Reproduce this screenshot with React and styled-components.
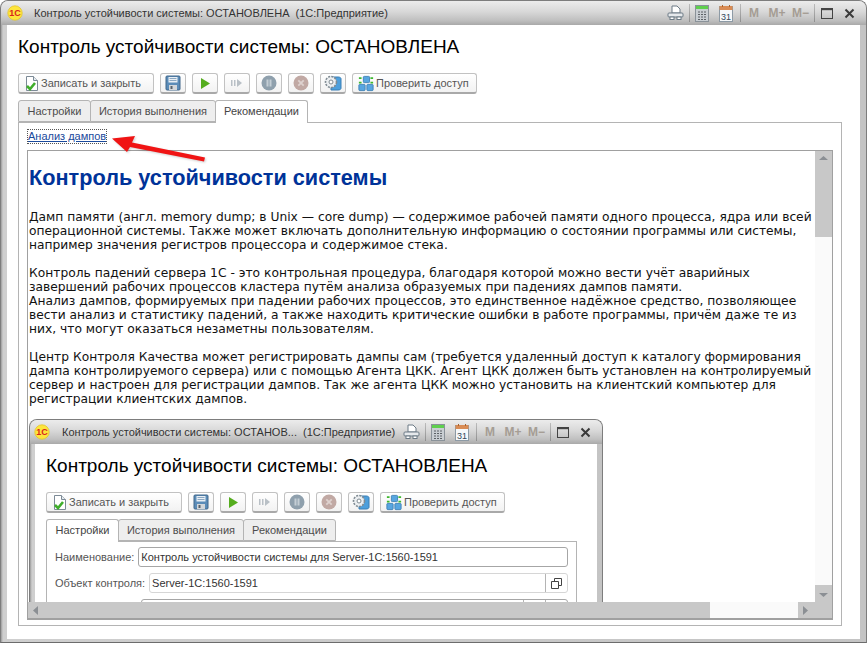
import styled, { createGlobalStyle } from 'styled-components';

const GlobalStyle = createGlobalStyle`
  html, body {
    margin: 0;
    padding: 0;
    background: #fff;
  }
  body {
    width: 867px;
    height: 645px;
    overflow: hidden;
    font-family: "Liberation Sans", Arial, sans-serif;
    font-size: 11px;
    color: #4a4a40;
  }
`;

const Page = styled.div`
  position: relative;
  width: 867px;
  height: 645px;
  overflow: hidden;
`;

const WindowFrame = styled.div`
  box-sizing: border-box;
  display: flex;
  flex-direction: column;
  flex: none;
  width: ${({ $width }) => $width}px;
  height: ${({ $height }) => $height}px;
  padding: 0 ${({ $dense }) => ($dense ? 5 : 6)}px 3px;
  background: linear-gradient(90deg, #9c9c9c 0, #cfcfcf 2px, #c4c4c4 100%);
  border: 1px solid #7d7d7d;
  border-bottom-color: #6c6c6c;
  border-radius: 8px 8px 0 0;
`;

const TitleBar = styled.div`
  display: flex;
  align-items: center;
  flex: none;
  height: 24px;
  margin: 0 ${({ $dense }) => ($dense ? -5 : -6)}px;
  padding: 0 11px 0 ${({ $dense }) => ($dense ? 4 : 6)}px;
  background: linear-gradient(#ececec 0, #d8d8d8 45%, #c0c0c0 80%, #a9a9a9 100%);
  border-radius: 7px 7px 0 0;
`;

const TitleText = styled.span`
  flex: 1;
  margin-left: ${({ $dense }) => ($dense ? 12 : 11)}px;
  color: #333;
  white-space: pre;
`;

const TitleIcons = styled.div`
  display: flex;
  align-items: center;
  height: 100%;
`;

const TitleSep = styled.i`
  width: 1px;
  height: 18px;
  margin: 0 ${({ $right }) => $right}px 0 ${({ $left }) => $left}px;
  background: linear-gradient(#bbb, #8f8f8f);
`;

const IconGap = styled.span`
  flex: none;
  width: ${({ $w }) => $w}px;
`;

const MemKey = styled.b`
  width: ${({ $w }) => $w}px;
  color: #a59d94;
  font-size: 12px;
  text-align: center;
`;

const FormBody = styled.div`
  display: flex;
  flex-direction: column;
  flex: 1;
  min-height: 0;
  padding: 0 ${({ $dense }) => ($dense ? 20 : 18)}px 13px 11px;
  background: #fff;
`;

const FormTitle = styled.h1`
  margin: 0;
  height: 48px;
  color: #000;
  font-size: 19px;
  font-weight: 400;
  line-height: 44px;
  white-space: nowrap;
`;

const Toolbar = styled.div`
  display: flex;
  gap: 6px;
  flex: none;
  height: 21px;
`;

const ToolButton = styled.div`
  box-sizing: border-box;
  display: flex;
  align-items: center;
  justify-content: ${({ $text }) => ($text ? 'flex-start' : 'center')};
  gap: 2px;
  width: ${({ $w }) => $w || 26}px;
  height: 21px;
  padding: ${({ $text }) => ($text ? '0 0 0 5px' : '0')};
  color: #555;
  background: linear-gradient(#fff, #f2f2f2);
  border: 1px solid #c2c2c2;
  border-bottom: 2px solid #a9a9a9;
  border-radius: 3px;
  white-space: nowrap;
`;

const TabRow = styled.div`
  display: flex;
  flex: none;
  height: 23px;
  margin-top: 6px;
`;

const Tab = styled.div`
  box-sizing: border-box;
  width: ${({ $w }) => $w}px;
  height: ${({ $active }) => ($active ? 23 : 22)}px;
  margin-left: ${({ $first }) => ($first ? 0 : -1)}px;
  padding-top: 4px;
  color: ${({ $active }) => ($active ? '#444' : '#4c4c4c')};
  text-align: center;
  background: ${({ $active }) => ($active ? '#fff' : '#eee')};
  border: 1px solid #b4b4b4;
  border-bottom: ${({ $active }) => ($active ? 'none' : '1px solid #b4b4b4')};
  border-radius: 3px 3px 0 0;
  position: relative;
  z-index: ${({ $active }) => ($active ? 1 : 0)};
`;

const TabPanel = styled.div`
  box-sizing: border-box;
  display: flex;
  flex-direction: column;
  flex: 1;
  min-height: 0;
  margin: -1px 0 0 0;
  padding: ${({ $dense }) => ($dense ? '5px 8px 0 8px' : '6px 8px 5px 8px')};
  gap: 6px;
  border: 1px solid #b4b4b4;
`;

const LinkLine = styled.div`
  flex: none;
  height: 15px;
  padding-top: 1px;
  box-sizing: border-box;
`;

const DumpLink = styled.a`
  display: inline-block;
  margin-left: 1px;
  color: #1a4a9c;
  font-size: 11px;
  line-height: 13px;
  text-decoration: underline;
  outline: 1px dotted #555;
`;

const Browser = styled.div`
  box-sizing: border-box;
  display: grid;
  grid-template-columns: 1fr 17px;
  grid-template-rows: 1fr 16px;
  flex: 1;
  min-height: 0;
  background: #fff;
  border: 1px solid #a0a0a0;
  border-bottom-width: 2px;
`;

const Viewport = styled.div`
  overflow: hidden;
  min-width: 0;
  min-height: 0;
  padding: 0 0 0 1px;
`;

const Article = styled.div`
  width: 786px;
  color: #111;
  font-family: "DejaVu Sans", Verdana, sans-serif;
  font-size: 12.27px;
  line-height: 14px;
`;

const ArticleTitle = styled.h2`
  margin: 13px 0 18px;
  color: #003399;
  font-family: "Liberation Sans", Arial, sans-serif;
  font-size: 21.7px;
  font-weight: 700;
  line-height: 28px;
`;

const Paragraph = styled.p`
  margin: 0 0 14px;
  white-space: nowrap;
`;

const ScreenBlock = styled.div`
  margin-top: -1px;
  font-family: "Liberation Sans", Arial, sans-serif;
  font-size: 11px;
  line-height: normal;
  color: #4a4a40;
`;

const ScrollV = styled.div`
  display: flex;
  flex-direction: column;
  background: #fafafa;
`;

const ScrollH = styled.div`
  display: flex;
  background: #fafafa;
`;

const Thumb = styled.div`
  flex: none;
  ${({ $vertical, $size }) => ($vertical ? `height: ${$size}px;` : `width: ${$size}px;`)}
  display: flex;
  align-items: ${({ $vertical }) => ($vertical ? 'flex-start' : 'center')};
  justify-content: ${({ $vertical }) => ($vertical ? 'center' : 'flex-start')};
  padding: ${({ $vertical }) => ($vertical ? '4px 0 0' : '0 0 0 4px')};
  box-sizing: border-box;
  background: #c8c8c8;
`;

const Track = styled.div`
  flex: 1;
`;

const ArrowCell = styled.div`
  flex: none;
  display: flex;
  align-items: center;
  justify-content: center;
  width: 17px;
  height: ${({ $h }) => $h || 17}px;
  background: #c8c8c8;
`;

const Corner = styled.div`
  background: #c8c8c8;
`;

const FieldRow = styled.div`
  display: flex;
  align-items: center;
  flex: none;
  height: 20px;
  gap: 4px;
`;

const FieldLabel = styled.span`
  flex: none;
  color: #555;
  white-space: nowrap;
`;

const FieldInput = styled.div`
  box-sizing: border-box;
  display: flex;
  align-items: center;
  flex: 1;
  min-width: 0;
  height: 20px;
  margin-left: ${({ $indent }) => $indent || 0}px;
  padding-left: 2px;
  color: #333;
  background: #fff;
  border: 1px solid ${({ $soft }) => ($soft ? '#d6d6d6' : '#a6a6a6')};
  border-radius: 3px;
  white-space: nowrap;
`;

const InputValue = styled.span`
  flex: 1;
`;

const InputAddon = styled.div`
  flex: none;
  display: flex;
  align-items: center;
  justify-content: center;
  width: 21px;
  height: 18px;
  border-left: 1px solid #b4b4b4;
`;

const RedArrow = styled.svg`
  position: absolute;
  left: 105px;
  top: 130px;
  filter: drop-shadow(1px 1px 1px rgba(0, 0, 0, 0.2));
`;

const Logo = () => (
  <svg width="16" height="16" viewBox="0 0 16 16">
    <circle cx="8" cy="8" r="7.2" fill="#fde53c" stroke="#e5c52a" strokeWidth="0.8" />
    <text x="8" y="11" fontSize="9" fontWeight="700" fill="#d8261c" textAnchor="middle" fontFamily="Liberation Sans">1С</text>
  </svg>
);

const PrintIcon = () => (
  <svg width="17" height="16" viewBox="0 0 17 16">
    <path d="M5 1h5l3 3v4H5z" fill="#fff" stroke="#6d7b86" />
    <rect x="1" y="8" width="15" height="4" rx="1" fill="#e6e9ec" stroke="#6d7b86" />
    <rect x="3" y="12" width="4" height="2.5" fill="#fff" stroke="#6d7b86" />
    <rect x="10" y="12" width="4" height="2.5" fill="#fff" stroke="#6d7b86" />
  </svg>
);

const CalcIcon = () => (
  <svg width="14" height="17" viewBox="0 0 14 17">
    <rect x="0.5" y="0.5" width="13" height="16" fill="#c9ced3" stroke="#8a9299" />
    <rect x="1" y="1" width="12" height="3" fill="#5fcf4e" />
    <path d="M3 7h2M6 7h2M9 7h2M3 9.500h2M6 9.500h2M9 9.500h2M3 12h2M6 12h2M9 12h2M3 14.500h2M6 14.500h2M9 14.500h2" stroke="#5c6166" />
  </svg>
);

const CalendarIcon = () => (
  <svg width="14" height="17" viewBox="0 0 14 17">
    <rect x="0.500" y="1.500" width="13" height="15" fill="#f6f8fa" stroke="#8d9aa5" />
    <rect x="0.500" y="1" width="13" height="4" fill="#d98c55" />
    <path d="M3.500 0v2M10.500 0v2" stroke="#a5622f" />
    <text x="7" y="14.500" fontSize="9" fill="#33475a" textAnchor="middle" fontFamily="Liberation Sans">31</text>
  </svg>
);

const MaxIcon = () => (
  <svg width="12" height="11" viewBox="0 0 12 11">
    <rect x="0.500" y="0.500" width="11" height="10" fill="none" stroke="#444" />
    <path d="M0 1.500h12" stroke="#444" strokeWidth="1.400" />
  </svg>
);

const CloseIcon = () => (
  <svg width="11" height="11" viewBox="0 0 11 11">
    <path d="M1.500 1.500l8 8M9.500 1.500l-8 8" stroke="#3a3a3a" strokeWidth="2" />
  </svg>
);

const SaveCloseIcon = () => (
  <svg width="15" height="17" viewBox="0 0 15 17">
    <path d="M2.500 1.500h7l4 4v10h-11z" fill="#fff" stroke="#7c8a96" />
    <path d="M9.500 1.500v4h4" fill="#e6ebef" stroke="#7c8a96" />
    <path d="M3 11l3 3 5-6" fill="none" stroke="#3fae2a" strokeWidth="2.600" />
  </svg>
);

const SaveIcon = () => (
  <svg width="16" height="16" viewBox="0 0 16 16">
    <rect x="1" y="1" width="14" height="14" rx="1" fill="#5b8cb8" stroke="#41678a" />
    <rect x="3.500" y="2" width="9" height="5.500" fill="#e9eff5" />
    <path d="M4.500 3.500h7M4.500 5.500h7" stroke="#8ba8c2" />
    <rect x="4" y="10" width="8" height="5" fill="#d2d6da" />
    <rect x="5.500" y="11" width="2" height="3" fill="#56616b" />
  </svg>
);

const PlayIcon = () => (
  <svg width="12" height="13" viewBox="0 0 12 13">
    <path d="M2 1l9 5.500-9 5.500z" fill="#55ad1e" />
  </svg>
);

const StepIcon = () => (
  <svg width="14" height="10" viewBox="0 0 14 10">
    <path d="M1 2h1.500v6H1zM4 2h1.500v6H4z" fill="#b9c0c6" />
    <path d="M7 1l5 4-5 4z" fill="#b9c0c6" />
  </svg>
);

const PauseIcon = () => (
  <svg width="16" height="16" viewBox="0 0 16 16">
    <circle cx="8" cy="8" r="7.500" fill="#8fa0ad" />
    <path d="M5.500 4.500h2v7h-2zM8.500 4.500h2v7h-2z" fill="#c4ced5" />
  </svg>
);

const StopIcon = () => (
  <svg width="16" height="16" viewBox="0 0 16 16">
    <circle cx="8" cy="8" r="7.500" fill="#c1a9a4" />
    <path d="M5.300 5.300l5.400 5.400M10.700 5.300l-5.400 5.400" stroke="#ded2cf" strokeWidth="1.800" />
  </svg>
);

const GearDbIcon = () => (
  <svg width="18" height="17" viewBox="0 0 18 17">
    <path d="M7 2h7c2 0 3 .8 3 1.800v9.400c0 1-1 1.800-3 1.800H7z" fill="#4d9fdc" stroke="#3a7fb5" />
    <circle cx="7" cy="7" r="5.500" fill="#eceff1" stroke="#7f8a92" strokeWidth="1.600" strokeDasharray="2 1.200" />
    <circle cx="7" cy="7" r="2" fill="#fff" stroke="#7f8a92" />
  </svg>
);

const NetworkIcon = () => (
  <svg width="16" height="17" viewBox="0 0 18 18">
    <rect x="6" y="1" width="7" height="7" rx="1" fill="#57a6e0" stroke="#3c7fb3" />
    <rect x="1" y="10" width="7" height="7" rx="1" fill="#57a6e0" stroke="#3c7fb3" />
    <rect x="10" y="10" width="7" height="7" rx="1" fill="#57a6e0" stroke="#3c7fb3" />
    <path d="M1 3h3M14 3h3M1 8h3M14 8h3" stroke="#3eb82e" strokeWidth="2" />
  </svg>
);

const CopyIcon = () => (
  <svg width="11" height="11" viewBox="0 0 11 11">
    <path d="M3.500 3V.500h7v7H8M.500 3.500h7v7h-7z" fill="none" stroke="#444" />
  </svg>
);

const Tri = ({ dir }) => {
  const paths = {
    up: 'M0 5L4.500 1 9 5z',
    down: 'M0 4l4.500 4L9 4z',
    left: 'M6 0L1 4.500 6 9z',
    right: 'M1 0l5 4.500L1 9z',
  };
  return (
    <svg width="9" height="9" viewBox="0 0 9 9" style={{ display: 'block' }}>
      <path d={paths[dir]} fill="#8b8f94" />
    </svg>
  );
};

const tabs = [
  { label: 'Настройки', width: 73 },
  { label: 'История выполнения', width: 126 },
  { label: 'Рекомендации', width: 93 },
];

function Window({ width, height, caption, activeTab, dense, children }) {
  return (
    <WindowFrame $width={width} $height={height} $dense={dense}>
      <TitleBar $dense={dense}>
        <Logo />
        <TitleText $dense={dense}>{caption}</TitleText>
        <TitleIcons>
          <PrintIcon />
          <TitleSep $left={5} $right={5} />
          <CalcIcon />
          <IconGap $w={10} />
          <CalendarIcon />
          <TitleSep $left={7} $right={5} />
          <MemKey $w={16}>M</MemKey>
          <MemKey $w={30}>M+</MemKey>
          <MemKey $w={16}>M−</MemKey>
          <TitleSep $left={6} $right={6} />
          <MaxIcon />
          <IconGap $w={11} />
          <CloseIcon />
        </TitleIcons>
      </TitleBar>
      <FormBody $dense={dense}>
        <FormTitle>Контроль устойчивости системы: ОСТАНОВЛЕНА</FormTitle>
        <Toolbar>
          <ToolButton $text $w={136}>
            <SaveCloseIcon />
            Записать и закрыть
          </ToolButton>
          <ToolButton><SaveIcon /></ToolButton>
          <ToolButton><PlayIcon /></ToolButton>
          <ToolButton><StepIcon /></ToolButton>
          <ToolButton><PauseIcon /></ToolButton>
          <ToolButton><StopIcon /></ToolButton>
          <ToolButton><GearDbIcon /></ToolButton>
          <ToolButton $text $w={125}>
            <NetworkIcon />
            Проверить доступ
          </ToolButton>
        </Toolbar>
        <TabRow>
          {tabs.map((tab, i) => (
            <Tab key={tab.label} $w={tab.width} $first={i === 0} $active={i === activeTab}>
              {tab.label}
            </Tab>
          ))}
        </TabRow>
        <TabPanel $dense={dense}>{children}</TabPanel>
      </FormBody>
    </WindowFrame>
  );
}

function App() {
  return (
    <Page>
      <GlobalStyle />
      <Window
        width={867}
        height={643}
        caption="Контроль устойчивости системы: ОСТАНОВЛЕНА  (1С:Предприятие)"
        activeTab={2}
      >
        <LinkLine>
          <DumpLink>Анализ дампов</DumpLink>
        </LinkLine>
        <Browser>
          <Viewport>
            <Article>
              <ArticleTitle>Контроль устойчивости системы</ArticleTitle>
              <Paragraph>
                Дамп памяти (англ. memory dump; в Unix — core dump) — содержимое рабочей памяти одного процесса, ядра или всей
                <br />
                операционной системы. Также может включать дополнительную информацию о состоянии программы или системы,
                <br />
                например значения регистров процессора и содержимое стека.
              </Paragraph>
              <Paragraph>
                Контроль падений сервера 1С - это контрольная процедура, благодаря которой можно вести учёт аварийных
                <br />
                завершений рабочих процессов кластера путём анализа образуемых при падениях дампов памяти.
                <br />
                Анализ дампов, формируемых при падении рабочих процессов, это единственное надёжное средство, позволяющее
                <br />
                вести анализ и статистику падений, а также находить критические ошибки в работе программы, причём даже те из
                <br />
                них, что могут оказаться незаметны пользователям.
              </Paragraph>
              <Paragraph>
                Центр Контроля Качества может регистрировать дампы сам (требуется удаленный доступ к каталогу формирования
                <br />
                дампа контролируемого сервера) или с помощью Агента ЦКК. Агент ЦКК должен быть установлен на контролируемый
                <br />
                сервер и настроен для регистрации дампов. Так же агента ЦКК можно установить на клиентский компьютер для
                <br />
                регистрации клиентских дампов.
              </Paragraph>
              <ScreenBlock>
                <Window
                  width={574}
                  height={420}
                  caption="Контроль устойчивости системы: ОСТАНОВ...  (1С:Предприятие)"
                  activeTab={0}
                  dense
                >
                  <FieldRow>
                    <FieldLabel>Наименование:</FieldLabel>
                    <FieldInput>
                      <InputValue>Контроль устойчивости системы для Server-1C:1560-1591</InputValue>
                    </FieldInput>
                  </FieldRow>
                  <FieldRow>
                    <FieldLabel>Объект контроля:</FieldLabel>
                    <FieldInput $soft>
                      <InputValue>Server-1C:1560-1591</InputValue>
                      <InputAddon><CopyIcon /></InputAddon>
                    </FieldInput>
                  </FieldRow>
                  <FieldRow>
                    <FieldInput $indent={86}>
                      <InputValue />
                      <InputAddon />
                      <InputAddon />
                    </FieldInput>
                  </FieldRow>
                </Window>
              </ScreenBlock>
            </Article>
          </Viewport>
          <ScrollV>
            <Thumb $vertical $size={86}>
              <Tri dir="up" />
            </Thumb>
            <Track />
            <ArrowCell><Tri dir="down" /></ArrowCell>
          </ScrollV>
          <ScrollH>
            <Thumb $size={682}>
              <Tri dir="left" />
            </Thumb>
            <Track />
            <ArrowCell $h={16}><Tri dir="right" /></ArrowCell>
          </ScrollH>
          <Corner />
        </Browser>
      </Window>
      <RedArrow width="105" height="35" viewBox="0 0 105 35">
        <path d="M7 8.500L30 6l-3 6.500 73 15-1 4-74-14.500-3 5z" fill="#f01414" />
      </RedArrow>
    </Page>
  );
}

export default App;
